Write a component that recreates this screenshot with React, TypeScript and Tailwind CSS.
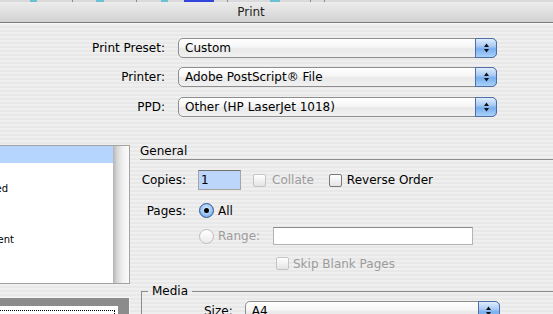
import React from "react";
import clsx from "clsx";

function Arrows() {
  return (
    <svg width="5" height="10" viewBox="0 0 5 10">
      <polygon points="2.5,0.5 5,4 0,4" fill="#111" />
      <polygon points="0,6 5,6 2.5,9.5" fill="#111" />
    </svg>
  );
}

function Popup({ text, className }: { text: string; className?: string }) {
  return (
    <div
      className={clsx(
        "flex h-[20px] rounded-[5px] border border-[#8e8e8e] bg-[linear-gradient(180deg,#ffffff_0%,#f6f6f6_45%,#e9e9e9_55%,#f1f1f1_100%)]",
        className
      )}
    >
      <div className="flex-1 pl-[6px] leading-[18px] whitespace-nowrap overflow-hidden">{text}</div>
      <div className="w-[22px] -my-px -mr-px flex items-center justify-center rounded-r-[5px] border border-[#4d6fa6] bg-[linear-gradient(180deg,#e0edfd_0%,#a9cbf4_40%,#78afef_55%,#aad1fb_100%)]">
        <Arrows />
      </div>
    </div>
  );
}

function Checkbox({ disabled, className }: { disabled?: boolean; className?: string }) {
  return (
    <div
      className={clsx(
        "w-[13px] h-[13px] shrink-0 rounded-[2px] border bg-[linear-gradient(180deg,#ffffff,#e4e4e4)]",
        disabled ? "border-[#c4c4c4]" : "border-[#7a7a7a]",
        className
      )}
    />
  );
}

function Radio({ on, className }: { on?: boolean; className?: string }) {
  return on ? (
    <div
      className={clsx(
        "w-[15px] h-[15px] shrink-0 rounded-full border border-[#34558c] flex items-center justify-center bg-[radial-gradient(circle_at_50%_40%,#e4effd_0%,#a6ccf6_45%,#5a98e6_100%)]",
        className
      )}
    >
      <div className="w-[5px] h-[5px] rounded-full bg-black" />
    </div>
  ) : (
    <div
      className={clsx(
        "w-[15px] h-[15px] shrink-0 rounded-full border border-[#bdbdbd] bg-[linear-gradient(180deg,#ffffff,#ebebeb)]",
        className
      )}
    />
  );
}

export default function App() {
  return (
    <div className="w-[553px] h-[314px] overflow-hidden text-[12px] text-black font-['DejaVu_Sans',sans-serif] bg-[repeating-linear-gradient(180deg,#efefef_0px,#efefef_2px,#e8e8e8_2px,#e8e8e8_4px)]">
      {/* background window strip */}
      <div className="h-[2px] flex bg-[#dadada]">
        <div className="ml-[30px] w-[7px] bg-[#6cc0d4]" />
        <div className="ml-[35px] w-px bg-[#8a8a8a]" />
        <div className="ml-[23px] w-[8px] bg-[#6cc0d4]" />
        <div className="ml-[32px] w-px bg-[#8a8a8a]" />
        <div className="ml-[24px] w-[7px] bg-[#6cc0d4]" />
        <div className="ml-[16px] w-[30px] bg-[#3344dd]" />
        <div className="ml-[13px] w-px bg-[#8a8a8a]" />
        <div className="ml-[42px] w-[10px] bg-[#6cc0d4]" />
        <div className="ml-[30px] w-px bg-[#8a8a8a]" />
        <div className="ml-[13px] w-px bg-[#8a8a8a]" />
      </div>
      {/* title bar */}
      <div className="h-[21px] flex border-b border-[#7b7b7b] bg-[linear-gradient(180deg,#ececec,#d2d2d2)]">
        <div className="w-[502px] text-center leading-[20px] text-[#1e1e1e]">Print</div>
      </div>
      <div className="h-px bg-[#f8f8f8]" />

      {/* popups */}
      <div className="pt-[14px]">
        <div className="flex items-center h-[20px]">
          <div className="w-[165px] text-right">Print Preset:</div>
          <Popup text="Custom" className="ml-[13px] w-[319px]" />
        </div>
        <div className="mt-[9px] flex items-center h-[20px]">
          <div className="w-[165px] text-right">Printer:</div>
          <Popup text="Adobe PostScript® File" className="ml-[13px] w-[319px]" />
        </div>
        <div className="mt-[10px] flex items-center h-[20px]">
          <div className="w-[165px] text-right">PPD:</div>
          <Popup text="Other (HP LaserJet 1018)" className="ml-[13px] w-[319px]" />
        </div>
      </div>

      {/* main */}
      <div className="mt-[26px] flex">
        {/* left column */}
        <div className="w-[130px] shrink-0">
          <div className="mt-[2px] h-[139px] flex border-y border-r border-[#a3a3a3] bg-white">
            <div className="w-[113px] overflow-hidden text-[10px] leading-[17px]">
              <div className="h-[17px] bg-[#b5d5ff]" />
              <div className="h-[17px]" />
              <div className="h-[17px] flex">
                <div className="w-[8px] flex justify-end whitespace-nowrap">Marks and Bleed</div>
              </div>
              <div className="h-[17px]" />
              <div className="h-[17px]" />
              <div className="h-[17px] flex">
                <div className="w-[14px] flex justify-end whitespace-nowrap">Color Management</div>
              </div>
              <div className="h-[17px]" />
              <div className="h-[17px]" />
            </div>
            <div className="w-[16px] bg-[linear-gradient(90deg,#b4b4b4_0%,#d6d6d6_25%,#f0f0f0_60%,#fbfbfb_100%)]" />
          </div>
          <div className="mt-[13px] h-[17px] border-t border-r border-[#f7f7f7] bg-[#8c8c8c] pt-[8px] pr-[11px]">
            <div className="h-full bg-white pt-[4px] pr-[3px]">
              <div className="h-full border-t border-r border-dotted border-black" />
            </div>
          </div>
        </div>

        {/* right column */}
        <div className="ml-[10px] flex-1">
          <div className="h-[17px] border-b border-[#8c8c8c] leading-[16px]">General</div>

          <div className="mt-[10px] flex items-center h-[20px]">
            <div className="w-[46px] text-right">Copies:</div>
            <div className="ml-[12px] w-[43px] h-[20px] border border-[#a5a5a5] border-t-[#6f6f6f] bg-[#bcd5fa] pl-[2px] leading-[18px]">
              1
            </div>
            <Checkbox disabled className="ml-[12px]" />
            <span className="ml-[6px] text-[#9c9c9c]">Collate</span>
            <Checkbox className="ml-[15px]" />
            <span className="ml-[5px]">Reverse Order</span>
          </div>

          <div className="mt-[13px] flex items-center h-[15px]">
            <div className="w-[46px] text-right">Pages:</div>
            <Radio on className="ml-[13px]" />
            <span className="ml-[4px]">All</span>
          </div>

          <div className="mt-[9px] flex items-center h-[18px]">
            <div className="w-[46px]" />
            <Radio className="ml-[13px]" />
            <span className="ml-[4px] text-[#9c9c9c]">Range:</span>
            <div className="ml-[13px] w-[200px] h-[18px] border border-[#b3b3b3] border-t-[#8a8a8a] bg-white" />
          </div>

          <div className="mt-[12px] flex items-center h-[13px]">
            <Checkbox disabled className="ml-[136px]" />
            <span className="ml-[4px] text-[#9c9c9c]">Skip Blank Pages</span>
          </div>

          <fieldset className="mt-[13px] ml-px w-[430px] border-t border-l border-[#8a8a8a] pb-[4px]">
            <legend className="ml-[6px] px-[4px] leading-[16px]">Media</legend>
            <div className="mt-[2px] flex items-center h-[20px]">
              <div className="ml-[62px]">Size:</div>
              <Popup text="A4" className="ml-[12px] w-[255px]" />
            </div>
          </fieldset>
        </div>
      </div>
    </div>
  );
}
